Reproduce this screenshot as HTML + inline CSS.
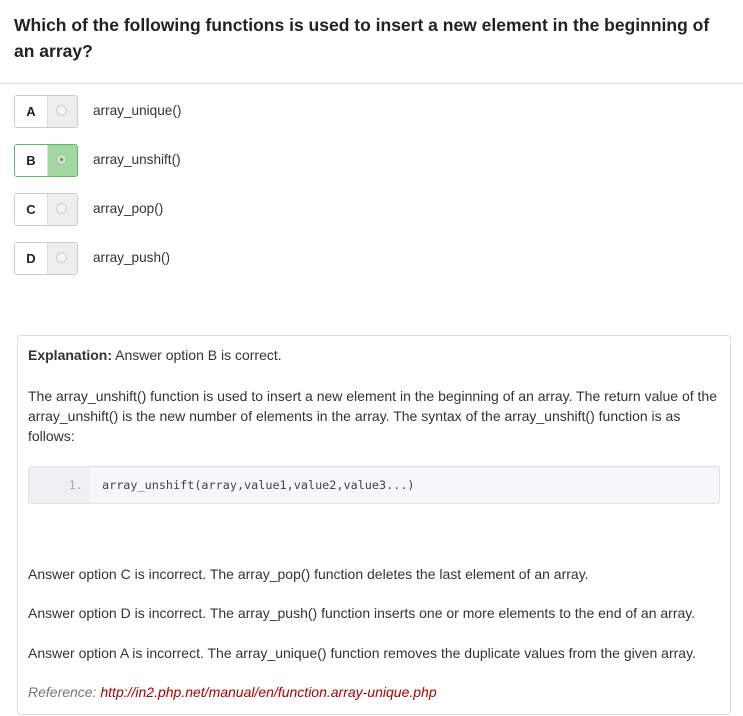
<!DOCTYPE html>
<html><head><meta charset="utf-8"><style>
body{margin:0;width:743px;height:716px;background:#fff;font-family:"Liberation Sans",Arial,sans-serif;color:#333;position:relative;overflow:hidden}
.a{position:absolute;white-space:nowrap}
h1{position:absolute;left:14px;top:12px;margin:0;font-size:17.5px;line-height:26px;font-weight:bold;color:#222;width:720px}
.hr{position:absolute;left:0;top:83px;width:743px;height:1px;background:#ddd}
.opt{position:absolute;left:14px;width:62px;height:31px;border:1px solid #ccc;border-radius:3px;overflow:hidden}
.opt .l{position:absolute;left:0;top:0;width:32px;height:31px;background:#fff;font-weight:bold;font-size:13px;line-height:31px;text-align:center;color:#222;border-right:1px solid #ddd}
.opt .r{position:absolute;left:33px;top:0;width:29px;height:31px;background:#eee}
.opt .r i{position:absolute;left:8px;top:9px;width:11px;height:11px;border-radius:50%;border:1px solid #ccc;background:#f4f4f4;box-sizing:border-box}
.opt.g{border-color:#6ab56a}
.opt.g .r{background:#a3d6a0}
.opt.g .r i{background:#c8e6c6;border-color:#9ac998}
.opt.g .r i:after{content:"";position:absolute;left:3px;top:3px;width:3px;height:3px;border-radius:50%;background:#777}
.ot{position:absolute;left:93px;font-size:13.6px;line-height:16px;color:#333}
.panel{position:absolute;left:17px;top:335px;width:712px;height:378px;border:1px solid #ddd;border-radius:4px}
.t{position:absolute;left:28px;font-size:14px;line-height:20px;color:#333}
.code{position:absolute;left:28px;top:466px;width:690px;height:36px;border:1px solid #e1e1e8;border-radius:3px;background:#f7f7f9}
.code .g{position:absolute;left:0;top:0;width:61px;height:36px;background:#f0f0f2;font-family:"DejaVu Sans Mono",monospace;font-size:11.8px;line-height:36px;color:#aaa;text-align:right;box-sizing:border-box;padding-right:7px}
.code .c{position:absolute;left:73px;top:0;font-family:"DejaVu Sans Mono",monospace;font-size:11.8px;line-height:36px;color:#444;white-space:nowrap}
</style></head><body>
<h1>Which of the following functions is used to insert a new element in the beginning of an array?</h1>
<div class="hr"></div>
<div class="opt" style="top:95px"><div class="l">A</div><div class="r"><i></i></div></div>
<div class="ot" style="top:103px">array_unique()</div>
<div class="opt g" style="top:144px"><div class="l">B</div><div class="r"><i></i></div></div>
<div class="ot" style="top:152px">array_unshift()</div>
<div class="opt" style="top:193px"><div class="l">C</div><div class="r"><i></i></div></div>
<div class="ot" style="top:201px">array_pop()</div>
<div class="opt" style="top:242px"><div class="l">D</div><div class="r"><i></i></div></div>
<div class="ot" style="top:250px">array_push()</div>

<div class="panel"></div>
<div class="t a" style="top:345px"><b>Explanation:</b> Answer option B is correct.</div>
<div class="t" style="top:386px;width:695px">The array_unshift() function is used to insert a new element in the beginning of an array. The return value of the array_unshift() is the new number of elements in the array. The syntax of the array_unshift() function is as follows:</div>
<div class="code"><div class="g">1.</div><div class="c">array_unshift(array,value1,value2,value3...)</div></div>
<div class="t a" style="top:564px">Answer option C is incorrect. The array_pop() function deletes the last element of an array.</div>
<div class="t a" style="top:603px">Answer option D is incorrect. The array_push() function inserts one or more elements to the end of an array.</div>
<div class="t a" style="top:643px">Answer option A is incorrect. The array_unique() function removes the duplicate values from the given array.</div>
<div class="t a" style="top:682px;font-style:italic;color:#777">Reference: <span style="color:#a00">http://in2.php.net/manual/en/function.array-unique.php</span></div>
</body></html>
